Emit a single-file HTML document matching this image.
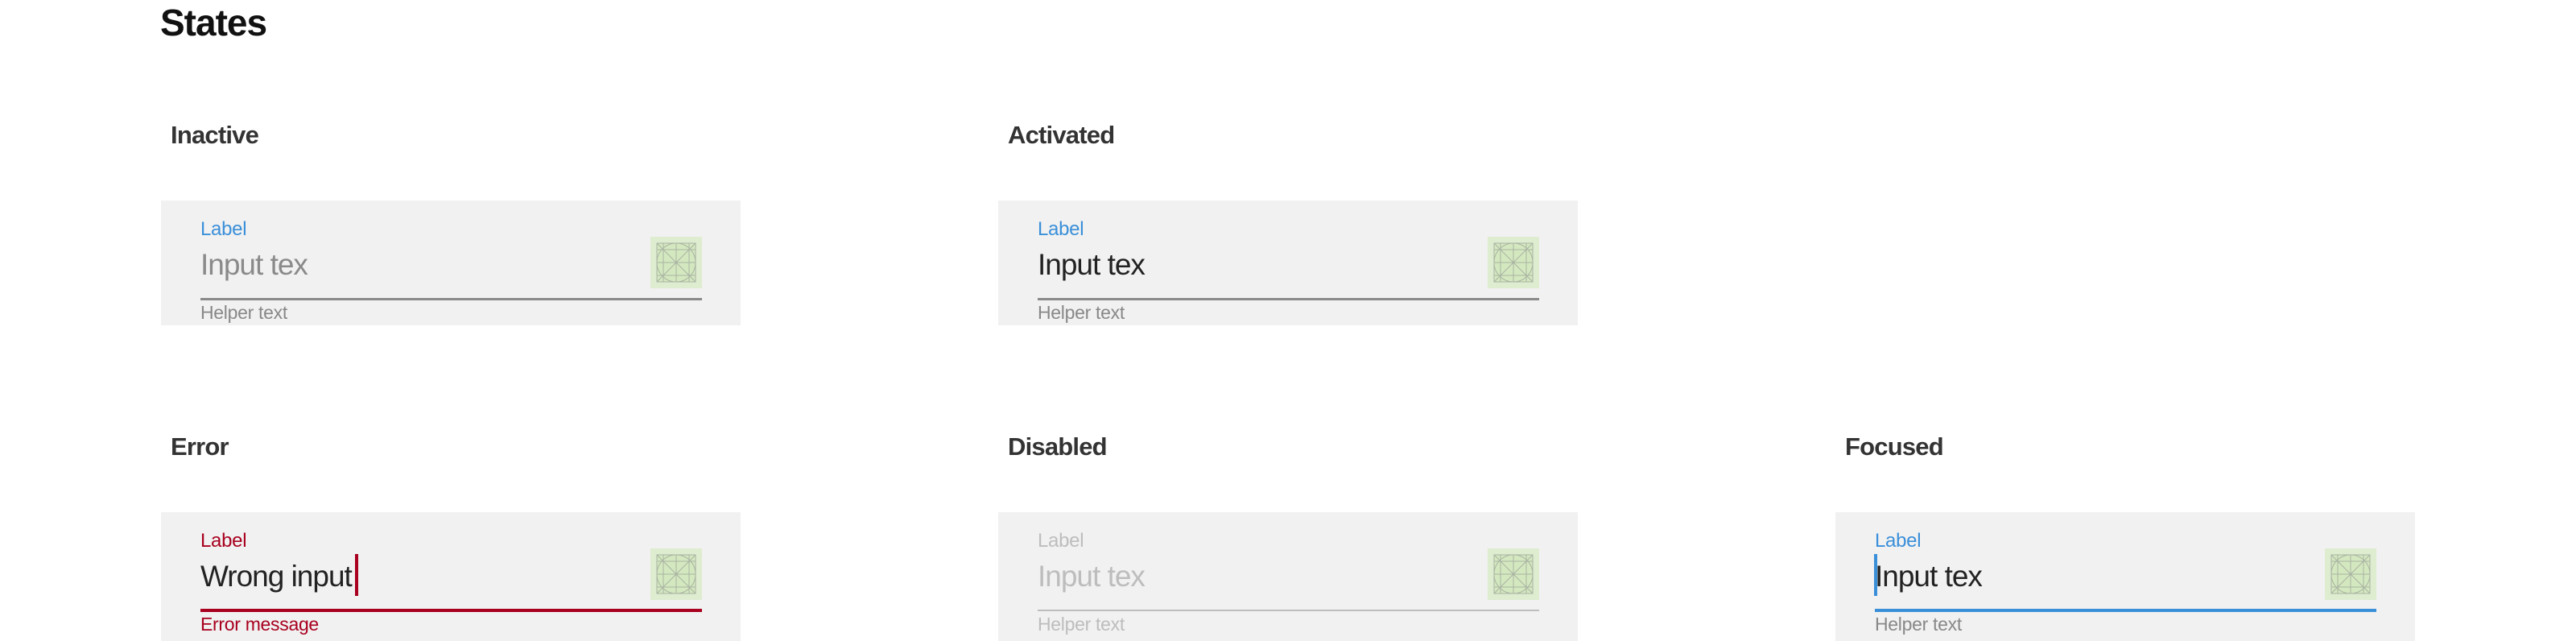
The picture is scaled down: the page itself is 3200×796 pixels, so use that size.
<!DOCTYPE html>
<html><head><meta charset="utf-8"><style>
*{margin:0;padding:0;box-sizing:border-box}
body{width:3200px;height:792px;background:#fff;position:relative;overflow:hidden;font-family:"Liberation Sans",sans-serif}
.a{position:absolute;white-space:nowrap;line-height:1}
.h1{font-size:46px;font-weight:bold;color:#111;left:199px;top:5px;letter-spacing:-1px}
.h2{font-size:31px;font-weight:bold;color:#333;letter-spacing:-0.8px}
.box{position:absolute;width:720px;background:#f1f1f1}
.lab{font-size:24px;letter-spacing:-0.3px}
.inp{font-size:37px;letter-spacing:-1px}
.help{font-size:23px;color:#888;letter-spacing:-0.3px}
.line{position:absolute;width:623px}
.ic{position:absolute;width:64px;height:64px}
.caret{position:absolute;width:4px;height:52px;right:-8px;top:-9px}
</style></head><body>
<div class="a h1">States</div>

<svg width="0" height="0" style="position:absolute"><defs>
<g id="icon"><rect width="64" height="64" fill="#deecd0"/><rect x="8" y="8" width="48" height="48" fill="#d4e8c0" stroke="#a9b3a2" stroke-width="1"/>
<g stroke="#a9b3a2" stroke-width="1" fill="none"><circle cx="32" cy="32" r="24"/><line x1="8" y1="8" x2="56" y2="56"/><line x1="56" y1="8" x2="8" y2="56"/><line x1="32" y1="8" x2="32" y2="56"/><line x1="8" y1="32" x2="56" y2="32"/><line x1="16" y1="8" x2="16" y2="56"/><line x1="48" y1="8" x2="48" y2="56"/><line x1="8" y1="16" x2="56" y2="16"/><line x1="8" y1="48" x2="56" y2="48"/></g></g></defs></svg>

<!-- Row 1 -->
<div class="a h2" style="left:212px;top:152px">Inactive</div>
<div class="box" style="left:200px;top:249px;height:155px"></div>
<div class="a lab" style="left:249px;top:273px;color:#3a8fd9">Label</div>
<div class="a inp" style="left:249px;top:310px;color:#8a8a8a">Input tex</div>
<svg class="ic" style="left:808px;top:294px"><use href="#icon"/></svg>
<div class="line" style="left:249px;top:370px;height:3px;background:#8a8a8a"></div>
<div class="a help" style="left:249px;top:377px">Helper text</div>

<div class="a h2" style="left:1252px;top:152px">Activated</div>
<div class="box" style="left:1240px;top:249px;height:155px"></div>
<div class="a lab" style="left:1289px;top:273px;color:#3a8fd9">Label</div>
<div class="a inp" style="left:1289px;top:310px;color:#222">Input tex</div>
<svg class="ic" style="left:1848px;top:294px"><use href="#icon"/></svg>
<div class="line" style="left:1289px;top:370px;height:3px;background:#8a8a8a"></div>
<div class="a help" style="left:1289px;top:377px">Helper text</div>

<!-- Row 2 -->
<div class="a h2" style="left:212px;top:539px">Error</div>
<div class="box" style="left:200px;top:636px;height:160px"></div>
<div class="a lab" style="left:249px;top:660px;color:#a8001e">Label</div>
<div class="a inp" style="left:249px;top:697px;color:#222">Wrong input<span class="caret" style="background:#a8001e"></span></div>
<svg class="ic" style="left:808px;top:681px"><use href="#icon"/></svg>
<div class="line" style="left:249px;top:756px;height:4px;background:#a8001e"></div>
<div class="a help" style="left:249px;top:764px;color:#a8001e">Error message</div>

<div class="a h2" style="left:1252px;top:539px">Disabled</div>
<div class="box" style="left:1240px;top:636px;height:160px"></div>
<div class="a lab" style="left:1289px;top:660px;color:#bdbdbd">Label</div>
<div class="a inp" style="left:1289px;top:697px;color:#bdbdbd">Input tex</div>
<svg class="ic" style="left:1848px;top:681px"><use href="#icon"/></svg>
<div class="line" style="left:1289px;top:757px;height:2px;background:#bdbdbd"></div>
<div class="a help" style="left:1289px;top:764px;color:#bdbdbd">Helper text</div>

<div class="a h2" style="left:2292px;top:539px">Focused</div>
<div class="box" style="left:2280px;top:636px;height:160px"></div>
<div class="a lab" style="left:2329px;top:660px;color:#3a8fd9">Label</div>
<div class="a inp" style="left:2329px;top:697px;color:#222">Input tex</div>
<div style="position:absolute;left:2328px;top:688px;width:4px;height:52px;background:#3a8fd9"></div>
<svg class="ic" style="left:2888px;top:681px"><use href="#icon"/></svg>
<div class="line" style="left:2329px;top:756px;height:4px;background:#3a8fd9"></div>
<div class="a help" style="left:2329px;top:764px">Helper text</div>
</body></html>
